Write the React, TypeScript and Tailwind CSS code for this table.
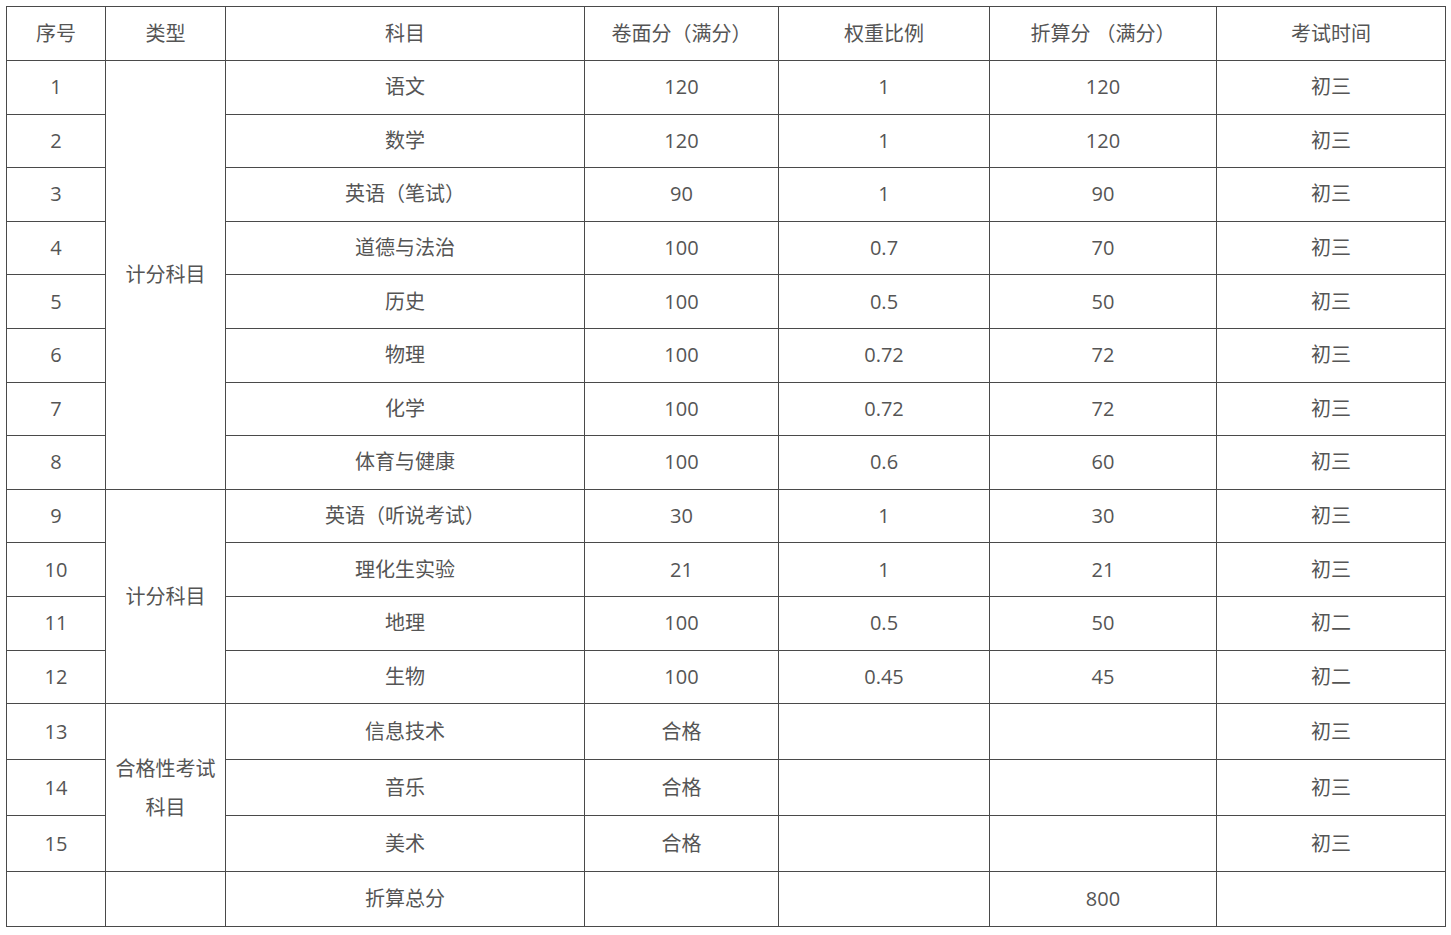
import React from 'react';

type Row = {
  no: string;
  subject: string;
  score: string;
  weight: string;
  converted: string;
  time: string;
};

const rows: Row[] = [
  { no: '1', subject: '语文', score: '120', weight: '1', converted: '120', time: '初三' },
  { no: '2', subject: '数学', score: '120', weight: '1', converted: '120', time: '初三' },
  { no: '3', subject: '英语（笔试）', score: '90', weight: '1', converted: '90', time: '初三' },
  { no: '4', subject: '道德与法治', score: '100', weight: '0.7', converted: '70', time: '初三' },
  { no: '5', subject: '历史', score: '100', weight: '0.5', converted: '50', time: '初三' },
  { no: '6', subject: '物理', score: '100', weight: '0.72', converted: '72', time: '初三' },
  { no: '7', subject: '化学', score: '100', weight: '0.72', converted: '72', time: '初三' },
  { no: '8', subject: '体育与健康', score: '100', weight: '0.6', converted: '60', time: '初三' },
  { no: '9', subject: '英语（听说考试）', score: '30', weight: '1', converted: '30', time: '初三' },
  { no: '10', subject: '理化生实验', score: '21', weight: '1', converted: '21', time: '初三' },
  { no: '11', subject: '地理', score: '100', weight: '0.5', converted: '50', time: '初二' },
  { no: '12', subject: '生物', score: '100', weight: '0.45', converted: '45', time: '初二' },
  { no: '13', subject: '信息技术', score: '合格', weight: '', converted: '', time: '初三' },
  { no: '14', subject: '音乐', score: '合格', weight: '', converted: '', time: '初三' },
  { no: '15', subject: '美术', score: '合格', weight: '', converted: '', time: '初三' },
];

// 类型列的合并单元格：起始行 -> [行数, 文本]
const groups: { [start: number]: [number, string] } = {
  0: [8, '计分科目'],
  8: [4, '计分科目'],
  12: [3, '合格性考试科目'],
};

const cell = 'border border-[#4a4a4a] text-center align-middle p-0';

export default function App() {
  return (
    <div
      className="bg-white w-[1451px] h-[935px] pt-[6px] pl-[6px] text-[20px] text-[#555555]"
      style={{ fontFamily: '"Open Sans", "Noto Sans CJK SC", sans-serif' }}
    >
      <table className="border-collapse table-fixed w-[1439px]">
        <colgroup>
          <col className="w-[99px]" />
          <col className="w-[120px]" />
          <col className="w-[359px]" />
          <col className="w-[194px]" />
          <col className="w-[211px]" />
          <col className="w-[227px]" />
          <col className="w-[229px]" />
        </colgroup>
        <thead>
          <tr className="h-[54px]">
            <th className={`${cell} font-normal`}>序号</th>
            <th className={`${cell} font-normal`}>类型</th>
            <th className={`${cell} font-normal`}>科目</th>
            <th className={`${cell} font-normal`}>卷面分（满分）</th>
            <th className={`${cell} font-normal`}>权重比例</th>
            <th className={`${cell} font-normal`}>折算分 （满分）</th>
            <th className={`${cell} font-normal`}>考试时间</th>
          </tr>
        </thead>
        <tbody>
          {rows.map((r, i) => (
            <tr key={r.no} className={i < 12 ? 'h-[53.6px]' : 'h-[56px]'}>
              <td className={cell}>{r.no}</td>
              {groups[i] && (
                <td rowSpan={groups[i][0]} className={`${cell} px-[6px] leading-[39px]`}>
                  {groups[i][1]}
                </td>
              )}
              <td className={cell}>{r.subject}</td>
              <td className={cell}>{r.score}</td>
              <td className={cell}>{r.weight}</td>
              <td className={cell}>{r.converted}</td>
              <td className={cell}>{r.time}</td>
            </tr>
          ))}
          <tr className="h-[55px]">
            <td className={cell}></td>
            <td className={cell}></td>
            <td className={cell}>折算总分</td>
            <td className={cell}></td>
            <td className={cell}></td>
            <td className={cell}>800</td>
            <td className={cell}></td>
          </tr>
        </tbody>
      </table>
    </div>
  );
}
